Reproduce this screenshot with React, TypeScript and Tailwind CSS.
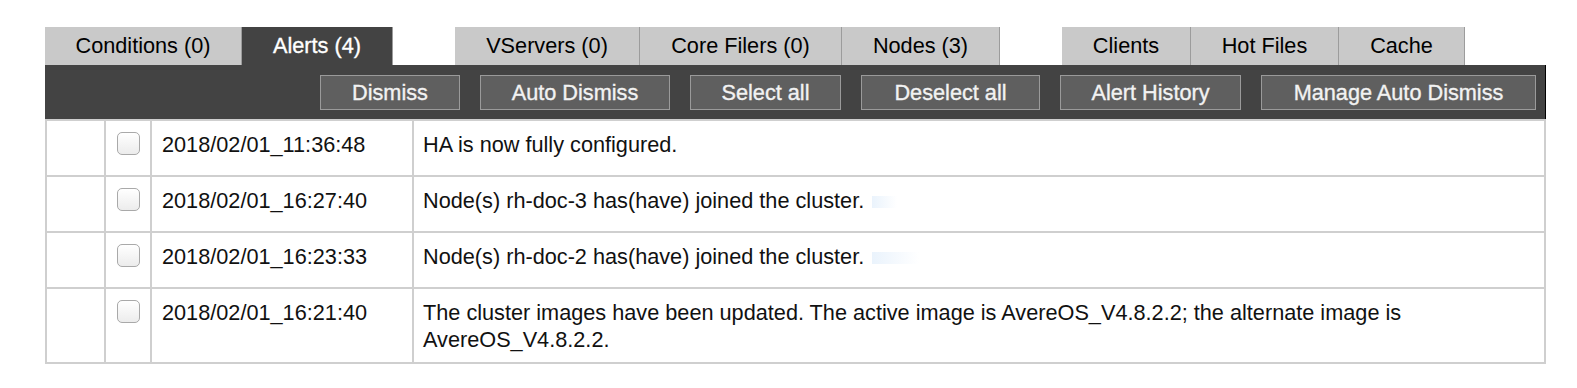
import React from "react";

const tabs = [
  { label: "Conditions (0)", w: "w-[197px]" },
  { label: "Alerts (4)", w: "w-[151px]", active: true },
  { label: "VServers (0)", w: "w-[185px]", gap: true },
  { label: "Core Filers (0)", w: "w-[202px]" },
  { label: "Nodes (3)", w: "w-[158px]" },
  { label: "Clients", w: "w-[129px]", gap: true },
  { label: "Hot Files", w: "w-[148px]" },
  { label: "Cache", w: "w-[126px]" },
];

const buttons = [
  { label: "Dismiss", w: "w-[140px]" },
  { label: "Auto Dismiss", w: "w-[190px]" },
  { label: "Select all", w: "w-[151px]" },
  { label: "Deselect all", w: "w-[179px]" },
  { label: "Alert History", w: "w-[181px]" },
  { label: "Manage Auto Dismiss", w: "w-[275px]" },
];

const alerts = [
  { time: "2018/02/01_11:36:48", text: "HA is now fully configured." },
  { time: "2018/02/01_16:27:40", text: "Node(s) rh-doc-3 has(have) joined the cluster.", smudge: "w-[25px]" },
  { time: "2018/02/01_16:23:33", text: "Node(s) rh-doc-2 has(have) joined the cluster.", smudge: "w-[47px]" },
  {
    time: "2018/02/01_16:21:40",
    text: "The cluster images have been updated. The active image is AvereOS_V4.8.2.2; the alternate image is AvereOS_V4.8.2.2.",
  },
];

export default function App() {
  return (
    <div
      className="w-[1577px] h-[388px] bg-white pt-[27px] pl-[45px] text-[21.7px] text-[#111]"
      style={{ fontFamily: '"Liberation Sans", Arial, sans-serif' }}
    >
      <div className="w-[1501px]">
        {/* tabs */}
        <div className="flex h-[38px]">
          {tabs.map((t) => (
            <div
              key={t.label}
              className={
                "flex items-center justify-center border-r border-[#9c9c9c] " +
                t.w +
                (t.gap ? " ml-[62px]" : "") +
                (t.active
                  ? " bg-[#434343] text-white [-webkit-text-stroke:0.35px_white]"
                  : " bg-[#c9c9c9] text-black")
              }
            >
              {t.label}
            </div>
          ))}
        </div>

        {/* toolbar */}
        <div className="flex h-[54px] items-start justify-end gap-5 bg-[#434343] border-r border-black pt-[10px] pr-[9px]">
          {buttons.map((b) => (
            <div
              key={b.label}
              className={
                "flex h-[35px] items-center justify-center border border-[#9a9a9a] bg-[#5f5f5f] pt-[2px] text-[#f2f2f2] [-webkit-text-stroke:0.35px_#f2f2f2] " +
                b.w
              }
            >
              {b.label}
            </div>
          ))}
        </div>

        {/* alerts table */}
        <table className="w-full border-collapse border-2 border-[#cfcfcf]">
          <colgroup>
            <col className="w-[59px]" />
            <col className="w-[46px]" />
            <col className="w-[262px]" />
            <col />
          </colgroup>
          <tbody>
            {alerts.map((a) => (
              <tr key={a.time} className="h-[56px] align-top">
                <td className="border-2 border-[#cfcfcf]" />
                <td className="border-2 border-[#cfcfcf] pt-[11px]">
                  <div className="mx-auto h-[23px] w-[23px] rounded-[5px] border border-[#a9a9a9] bg-gradient-to-b from-white to-[#ececec]" />
                </td>
                <td className="border-2 border-[#cfcfcf] pl-[10px] pt-[10px] leading-[27px]">
                  {a.time}
                </td>
                <td className="border-2 border-[#cfcfcf] pl-[9px] pr-[100px] pt-[10px] pb-[9px] leading-[27px]">
                  {a.text}
                  {a.smudge && (
                    <span className={"ml-2 inline-block h-[12px] align-middle bg-gradient-to-r from-[#eaf3fc] to-white " + a.smudge} />
                  )}
                </td>
              </tr>
            ))}
          </tbody>
        </table>
      </div>
    </div>
  );
}
